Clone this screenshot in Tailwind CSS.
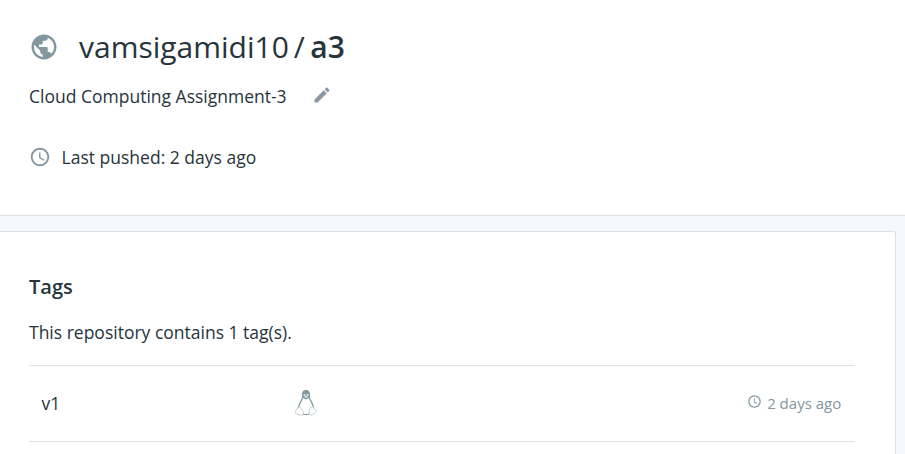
<!DOCTYPE html>
<html lang="en">
<head>
<meta charset="utf-8">
<title>vamsigamidi10/a3</title>
<script src="https://cdn.jsdelivr.net/npm/@tailwindcss/browser@4"></script>
</head>
<body class="h-[454px] overflow-hidden bg-[#f7f8fa] font-['Open_Sans','Noto_Sans',sans-serif] text-[17.5px] text-[#27343b]">
<header class="h-[216px] border-b border-[#dde1e4] bg-white pl-[29px] pt-[27px]">
  <h1 class="flex h-10 items-center text-[30px] leading-10">
    <svg class="mr-5 size-[30px] shrink-0 fill-[#8496a0]" viewBox="0 0 24 24"><path d="M12 2C6.480 2 2 6.480 2 12s4.480 10 10 10 10-4.480 10-10S17.520 2 12 2zm-1 17.930c-3.950-.49-7-3.850-7-7.930 0-.62.08-1.210.21-1.790L9 15v1c0 1.100.9 2 2 2v1.930zm6.900-2.540c-.26-.81-1-1.390-1.900-1.390h-1v-3c0-.55-.45-1-1-1H8v-2h2c.55 0 1-.45 1-1V7h2c1.100 0 2-.9 2-2v-.41c2.930 1.190 5 4.060 5 7.410 0 2.080-.8 3.970-2.100 5.390z"/></svg>
    <span>vamsigamidi10</span><span class="ml-[5px] mr-[5.500px]">/</span><span class="font-semibold">a3</span>
  </h1>
  <div class="mt-[17px] flex h-6 items-center leading-6">
    <span>Cloud Computing Assignment-3</span>
    <svg class="-mt-[3px] ml-[25px] size-5 fill-[#8b98a6]" viewBox="0 0 24 24"><path d="M3 17.250V21h3.750L17.810 9.940l-3.750-3.750L3 17.250zM20.710 7.040c.39-.39.39-1.020 0-1.410l-2.340-2.340c-.39-.39-1.020-.39-1.410 0l-1.830 1.830 3.750 3.750 1.830-1.830z"/></svg>
  </div>
  <div class="mt-[37px] flex h-6 items-center gap-[11px] leading-6">
    <svg class="size-[22px] fill-[#8496a0]" viewBox="0 0 24 24"><path d="M11.990 2C6.470 2 2 6.480 2 12s4.470 10 9.990 10C17.520 22 22 17.520 22 12S17.520 2 11.990 2zM12 20c-4.420 0-8-3.580-8-8s3.580-8 8-8 8 3.580 8 8-3.580 8-8 8zm.5-13H11v6l5.250 3.150.75-1.230-4.500-2.670z"/></svg>
    <span class="-ml-[.4px]">Last pushed: 2 days ago</span>
  </div>
</header>
<main class="mr-[9px] mt-[15px] h-[223px] rounded-tr-[3px] border-r border-t border-[#dce1e6] bg-white pl-[29px] pr-10 pt-[42px]">
  <h2 class="text-[20px] font-semibold leading-[26px]">Tags</h2>
  <p class="mt-5 leading-6">This repository contains 1 tag(s).</p>
  <div class="mt-[21px] flex h-[77px] items-center border-y border-[#e0e2e4] pl-[12.5px] pr-[13.800px]">
    <span class="w-[253px]">v1</span>
    <svg class="-mt-px h-[26px] w-[22px]" viewBox="0 0 22 26">
      <path fill="#8496a0" d="M11 0C7.800 0 6.900 2.300 7.100 5.100 7.200 8 6.500 9.200 5 11.700 3.700 14 3 16.200 2.800 18.500L7 24h8l4.200-5.500c-.2-2.300-.9-4.500-2.200-6.800-1.500-2.500-2.200-3.700-2.100-6.600C15.100 2.300 14.200 0 11 0z"/>
      <path fill="#fff" d="M8 8 11 9.400 13.900 8c.4 2.200 2.300 4.500 3.200 7 .8 2.400.4 4.700-.8 6.700-1 1.700-3 2.300-5.300 2.300s-4.300-.6-5.300-2.300c-1.200-2-1.600-4.300-.8-6.700.9-2.500 2.700-4.800 3.100-7z"/>
      <path fill="#fff" stroke="#b9c4ca" stroke-width=".8" d="M4.300 16.800c1.300.7 2.400 2.800 3.700 4.500 1.200 1.900.3 3.600-1.500 3.900-1.500.2-3.100-.9-5.200-1.500-1.300-.5-.6-1.600-.6-2.900 0-1.100.3-1.500 1.500-1.700 1-.3.900-2 2.100-2.300zM17.700 16.800c1.200.3 1.100 2 2.100 2.500.8.5 1.600 1.100 1.700 1.900 0 1-1.300 1.500-2.500 2.500-1.300 1.200-3.500 2.200-4.400 1-1-1.400-.2-3.500-.1-5.300.1-1.600 1.300-2.400 3.200-2.600z"/>
      <path fill="none" stroke="#8496a0" d="M8 24.200q3 .8 6 0"/>
      <circle cx="9.500" cy="5" r="1.050" fill="#e3e8ea"/><circle cx="12.600" cy="5" r="1.050" fill="#e3e8ea"/>
      <path fill="#d4dce0" d="m8.800 6.700 2.200-1 2.500 1L11 8.300z"/>
    </svg>
    <span class="ml-auto flex items-center gap-[5px] text-[15px] text-[#8496a0]">
      <svg class="-mt-[4px] size-[15px] fill-[#8496a0]" viewBox="0 0 24 24"><path d="M11.990 2C6.470 2 2 6.480 2 12s4.470 10 9.990 10C17.520 22 22 17.520 22 12S17.520 2 11.990 2zM12 20c-4.420 0-8-3.580-8-8s3.580-8 8-8 8 3.580 8 8-3.580 8-8 8zm.5-13H11v6l5.250 3.150.75-1.230-4.500-2.670z"/></svg>
      <span>2 days ago</span>
    </span>
  </div>
</main>
</body>
</html>
